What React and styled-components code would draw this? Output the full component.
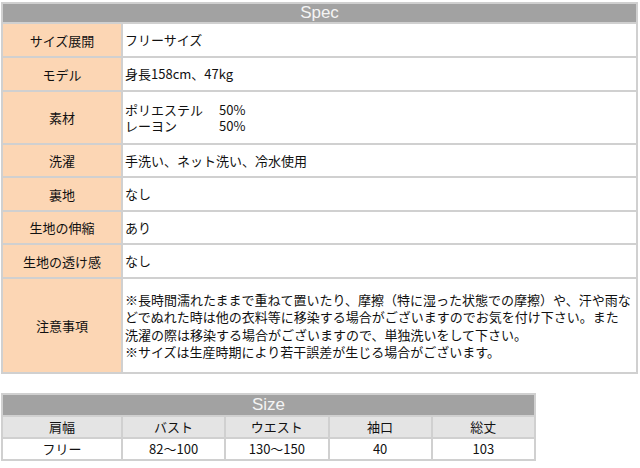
import React from 'react';
import styled, { createGlobalStyle } from 'styled-components';

const GlobalStyle = createGlobalStyle`
  body {
    margin: 0;
    background: #fff;
    font-family: "Noto Sans CJK JP", "Liberation Sans", sans-serif;
    color: #111;
  }
`;

const Page = styled.div`
  width: 640px;
  height: 468px;
  padding: 2px 0 0 1px;
  box-sizing: border-box;
  overflow: hidden;
`;

const SpecTable = styled.div`
  display: grid;
  grid-template-columns: 118px 1fr;
  gap: 2px;
  width: 637px;
  padding: 2px;
  box-sizing: border-box;
  background: #d0d0d0;
`;

const SizeTable = styled.div`
  display: grid;
  grid-template-columns: 118px repeat(4, 1fr);
  gap: 2px;
  width: 535px;
  margin-top: 19px;
  padding: 2px;
  box-sizing: border-box;
  background: #d0d0d0;
`;

const Caption = styled.div`
  grid-column: 1 / -1;
  height: ${p => p.$h}px;
  background: #a2a2a2;
  color: #f4f4f4;
  font-family: "Liberation Sans", Arial, sans-serif;
  font-size: 17px;
  line-height: ${p => p.$h}px;
  text-align: center;
`;

const Label = styled.div`
  height: ${p => p.$h}px;
  background: #fcd6b4;
  display: flex;
  align-items: center;
  justify-content: center;
  font-size: 13px;
`;

const Value = styled.div`
  height: ${p => p.$h}px;
  background: #fff;
  display: flex;
  flex-direction: column;
  justify-content: center;
  padding-left: 2px;
  font-size: 13px;
  line-height: ${p => p.$lh || 16}px;
  white-space: nowrap;
`;

const Material = styled.div`
  display: grid;
  grid-template-columns: 94px auto;
  line-height: 16px;
`;

const Cell = styled.div`
  height: 20px;
  background: ${p => (p.$head ? '#e4e4e4' : '#fff')};
  font-size: 13px;
  line-height: 20px;
  text-align: center;
`;

const specRows = [
  { label: 'サイズ展開', h: 32, value: 'フリーサイズ' },
  { label: 'モデル', h: 32, value: '身長158cm、47kg' },
  {
    label: '素材',
    h: 51,
    value: (
      <Material>
        <span>ポリエステル</span>
        <span>50%</span>
        <span>レーヨン</span>
        <span>50%</span>
      </Material>
    ),
  },
  { label: '洗濯', h: 31, value: '手洗い、ネット洗い、冷水使用' },
  { label: '裏地', h: 32, value: 'なし' },
  { label: '生地の伸縮', h: 31, value: 'あり' },
  { label: '生地の透け感', h: 32, value: 'なし' },
];

const notes = [
  '※長時間濡れたままで重ねて置いたり、摩擦（特に湿った状態での摩擦）や、汗や雨な',
  'どでぬれた時は他の衣料等に移染する場合がございますのでお気を付け下さい。また',
  '洗濯の際は移染する場合がございますので、単独洗いをして下さい。',
  '※サイズは生産時期により若干誤差が生じる場合がございます。',
];

const sizeHead = ['肩幅', 'バスト', 'ウエスト', '袖口', '総丈'];
const sizeData = ['フリー', '82～100', '130～150', '40', '103'];

export default function App() {
  return (
    <Page>
      <GlobalStyle />
      <SpecTable>
        <Caption $h={18}>Spec</Caption>
        {specRows.map(r => (
          <React.Fragment key={r.label}>
            <Label $h={r.h}>{r.label}</Label>
            <Value $h={r.h}>{r.value}</Value>
          </React.Fragment>
        ))}
        <Label $h={93}>注意事項</Label>
        <Value $h={93} $lh={17.5}>
          {notes.map(n => (
            <div key={n}>{n}</div>
          ))}
        </Value>
      </SpecTable>

      <SizeTable>
        <Caption $h={20}>Size</Caption>
        {sizeHead.map(t => (
          <Cell key={t} $head>{t}</Cell>
        ))}
        {sizeData.map(t => (
          <Cell key={t}>{t}</Cell>
        ))}
      </SizeTable>
    </Page>
  );
}
